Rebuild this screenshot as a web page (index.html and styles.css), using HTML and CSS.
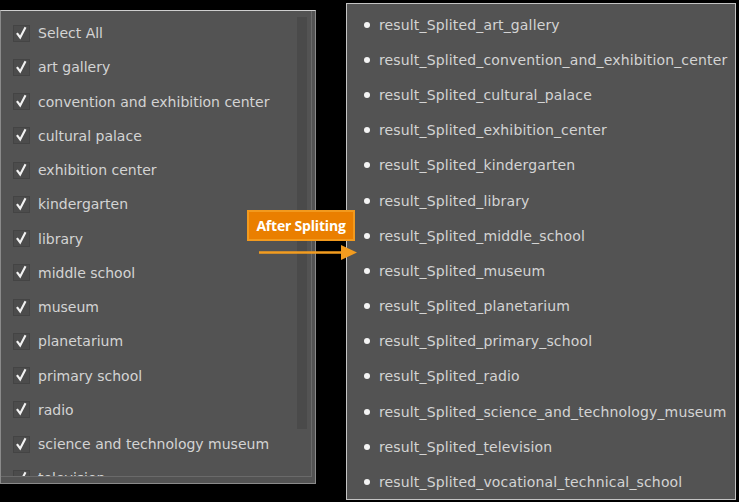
FILE: index.html
```html
<!DOCTYPE html>
<html>
<head>
<meta charset="utf-8">
<link rel="stylesheet" href="styles.css">
</head>
<body>
<div class="stage">
  <div class="left">
    <div class="left-inner">
      <ul class="checks">
        <li><span class="cb"><svg viewBox="0 0 17 17"><path d="M4 9 L7 13 L12.5 2.5" /></svg></span>Select All</li>
        <li><span class="cb"><svg viewBox="0 0 17 17"><path d="M4 9 L7 13 L12.5 2.5" /></svg></span>art gallery</li>
        <li><span class="cb"><svg viewBox="0 0 17 17"><path d="M4 9 L7 13 L12.5 2.5" /></svg></span>convention and exhibition center</li>
        <li><span class="cb"><svg viewBox="0 0 17 17"><path d="M4 9 L7 13 L12.5 2.5" /></svg></span>cultural palace</li>
        <li><span class="cb"><svg viewBox="0 0 17 17"><path d="M4 9 L7 13 L12.5 2.5" /></svg></span>exhibition center</li>
        <li><span class="cb"><svg viewBox="0 0 17 17"><path d="M4 9 L7 13 L12.5 2.5" /></svg></span>kindergarten</li>
        <li><span class="cb"><svg viewBox="0 0 17 17"><path d="M4 9 L7 13 L12.5 2.5" /></svg></span>library</li>
        <li><span class="cb"><svg viewBox="0 0 17 17"><path d="M4 9 L7 13 L12.5 2.5" /></svg></span>middle school</li>
        <li><span class="cb"><svg viewBox="0 0 17 17"><path d="M4 9 L7 13 L12.5 2.5" /></svg></span>museum</li>
        <li><span class="cb"><svg viewBox="0 0 17 17"><path d="M4 9 L7 13 L12.5 2.5" /></svg></span>planetarium</li>
        <li><span class="cb"><svg viewBox="0 0 17 17"><path d="M4 9 L7 13 L12.5 2.5" /></svg></span>primary school</li>
        <li><span class="cb"><svg viewBox="0 0 17 17"><path d="M4 9 L7 13 L12.5 2.5" /></svg></span>radio</li>
        <li><span class="cb"><svg viewBox="0 0 17 17"><path d="M4 9 L7 13 L12.5 2.5" /></svg></span>science and technology museum</li>
        <li><span class="cb"><svg viewBox="0 0 17 17"><path d="M4 9 L7 13 L12.5 2.5" /></svg></span>television</li>
      </ul>
      <div class="scrollbar"></div>
    </div>
  </div>
  <div class="right">
    <ul class="results">
      <li>result_Splited_art_gallery</li>
      <li>result_Splited_convention_and_exhibition_center</li>
      <li>result_Splited_cultural_palace</li>
      <li>result_Splited_exhibition_center</li>
      <li>result_Splited_kindergarten</li>
      <li>result_Splited_library</li>
      <li>result_Splited_middle_school</li>
      <li>result_Splited_museum</li>
      <li>result_Splited_planetarium</li>
      <li>result_Splited_primary_school</li>
      <li>result_Splited_radio</li>
      <li>result_Splited_science_and_technology_museum</li>
      <li>result_Splited_television</li>
      <li>result_Splited_vocational_technical_school</li>
    </ul>
  </div>
  <div class="badge">After Spliting</div>
  <svg class="arrow" viewBox="0 0 100 18" width="100" height="18">
    <path class="shaft" d="M0 9.5 H86" />
    <path class="head" d="M82 2 L98 9.5 L82 17 Z" />
  </svg>
</div>
</body>
</html>
```

FILE: styles.css
```css
html, body {
  margin: 0;
  padding: 0;
  background: #000;
}
.stage {
  position: relative;
  width: 739px;
  height: 502px;
  display: flex;
  align-items: flex-start;
  font-family: "DejaVu Sans", sans-serif;
  font-size: 14px;
  color: #d4d4d4;
}
.left {
  margin-top: 10px;
  width: 316px;
  height: 474px;
  box-sizing: border-box;
  background: #535353;
  border: 1px solid #8a8a8a;
  border-top-color: #cfcfcf;
  padding: 0 3px 6px 0;
}
.left-inner {
  position: relative;
  height: 100%;
  box-sizing: border-box;
  border-right: 1px solid #6a6a6a;
  border-bottom: 1px solid #6a6a6a;
  overflow: hidden;
  display: flex;
}
.checks {
  list-style: none;
  margin: 0;
  padding: 5px 0 0 12px;
  flex: 1;
}
.checks li {
  height: 34.25px;
  display: flex;
  align-items: center;
  white-space: nowrap;
}
.cb {
  width: 15px;
  height: 15px;
  border: 1px solid #444;
  background: #4c4c4c;
  margin-right: 8px;
  flex: none;
  display: flex;
}
.cb svg {
  width: 15px;
  height: 15px;
  overflow: visible;
}
.cb path {
  fill: none;
  stroke: #f2f2f2;
  stroke-width: 2.4;
  stroke-linecap: square;
}
.scrollbar {
  width: 10px;
  margin: 6px 4px 0 0;
  height: 412px;
  background: #4a4a4a;
  flex: none;
}
.right {
  margin-left: 30px;
  margin-top: 3px;
  width: 390px;
  height: 497px;
  box-sizing: border-box;
  background: #535353;
  border: 1px solid #c4c4c4;
}
.results {
  list-style: none;
  margin: 0;
  padding: 3px 0 0 17px;
}
.results li {
  height: 35.2px;
  display: flex;
  align-items: center;
  white-space: nowrap;
  letter-spacing: 0.15px;
}
.results li::before {
  content: "";
  width: 6px;
  height: 6px;
  border-radius: 50%;
  background: #f4f4f4;
  margin-right: 9px;
  flex: none;
}
.badge {
  position: absolute;
  left: 247px;
  top: 210px;
  width: 108px;
  height: 31px;
  box-sizing: border-box;
  background: #ea7f00;
  border: 2px solid #f29a1e;
  color: #fff;
  font-family: "Open Sans", sans-serif;
  font-weight: 700;
  font-size: 14px;
  letter-spacing: -0.2px;
  display: flex;
  align-items: center;
  justify-content: center;
}
.arrow {
  position: absolute;
  left: 259px;
  top: 243px;
}
.shaft {
  stroke: #f39c1f;
  stroke-width: 2.5;
}
.head {
  fill: #f39c1f;
}
```
